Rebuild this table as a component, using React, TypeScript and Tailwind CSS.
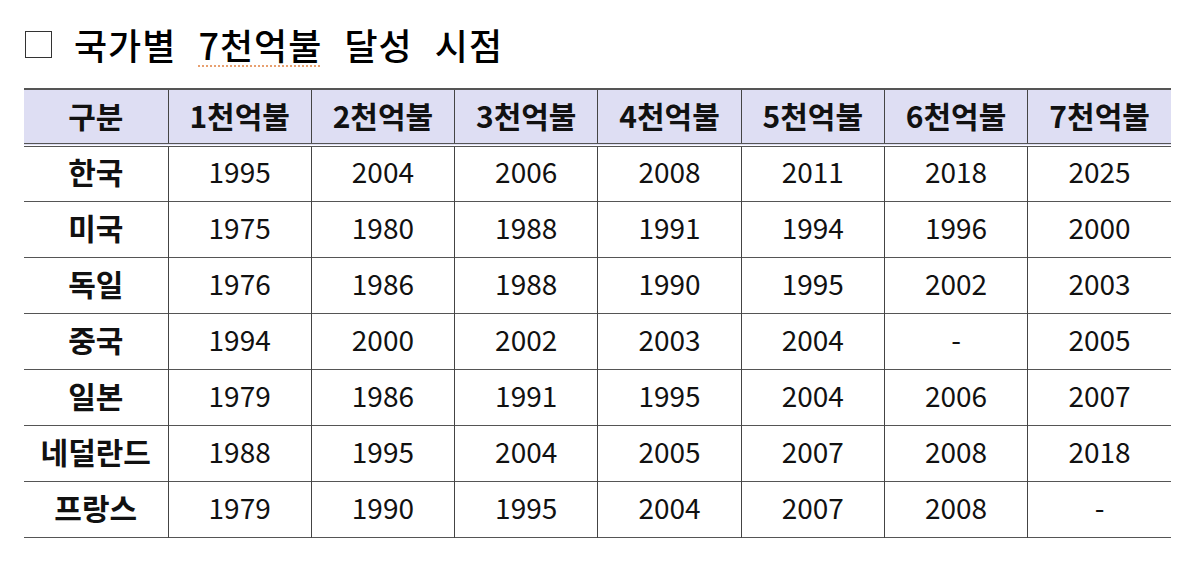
import React from 'react';

const heads = ['구분', '1천억불', '2천억불', '3천억불', '4천억불', '5천억불', '6천억불', '7천억불'];

const rows: [string, string[]][] = [
    ['한국', ['1995', '2004', '2006', '2008', '2011', '2018', '2025']],
    ['미국', ['1975', '1980', '1988', '1991', '1994', '1996', '2000']],
    ['독일', ['1976', '1986', '1988', '1990', '1995', '2002', '2003']],
    ['중국', ['1994', '2000', '2002', '2003', '2004', '-', '2005']],
    ['일본', ['1979', '1986', '1991', '1995', '2004', '2006', '2007']],
    ['네덜란드', ['1988', '1995', '2004', '2005', '2007', '2008', '2018']],
    ['프랑스', ['1979', '1990', '1995', '2004', '2007', '2008', '-']],
];

export default function App() {
    return (
        <div
            className="w-[1200px] h-[572px] bg-white text-[#111] overflow-hidden"
            style={{ fontFamily: '"Noto Sans CJK KR", "Noto Sans", sans-serif' }}
        >
            <div className="flex items-center pl-[25px] pt-[18px] h-[70px]">
                <span className="w-[27px] h-[27px] border-[1.5px] border-[#333] mr-[22px]" />
                <h1 className="text-[36px] font-medium leading-none tracking-[1px] [word-spacing:13px] text-black">
                    국가별{' '}
                    <span className="underline decoration-dotted decoration-[#e8a070] decoration-[1.5px] underline-offset-[5px]">
                        7천억불
                    </span>{' '}
                    달성 시점
                </h1>
            </div>
            <table className="ml-[24px] mt-[18px] w-[1147px] border-collapse table-fixed">
                <colgroup>
                    <col className="w-[144px]" />
                    {heads.slice(1).map((h) => (
                        <col key={h} />
                    ))}
                </colgroup>
                <thead>
                    <tr className="bg-[#dedef3] h-[56px] border-t-2 border-b-[4px] border-double border-t-[#555] border-b-[#555]">
                        {heads.map((h, i) => (
                            <th
                                key={h}
                                className={`text-[30px] font-bold text-center p-0 pb-[2px] ${
                                    i > 0 ? 'border-l border-[#444]' : ''
                                }`}
                            >
                                {h}
                            </th>
                        ))}
                    </tr>
                </thead>
                <tbody>
                    {rows.map(([name, vals]) => (
                        <tr key={name} className="h-[56px] border-b border-[#555]">
                            <td className="text-[30px] font-bold text-center p-0 pb-[4px]">{name}</td>
                            {vals.map((v, i) => (
                                <td
                                    key={i}
                                    className="text-[28px] text-center p-0 pb-[5px] border-l border-[#444]"
                                >
                                    {v}
                                </td>
                            ))}
                        </tr>
                    ))}
                </tbody>
            </table>
        </div>
    );
}
